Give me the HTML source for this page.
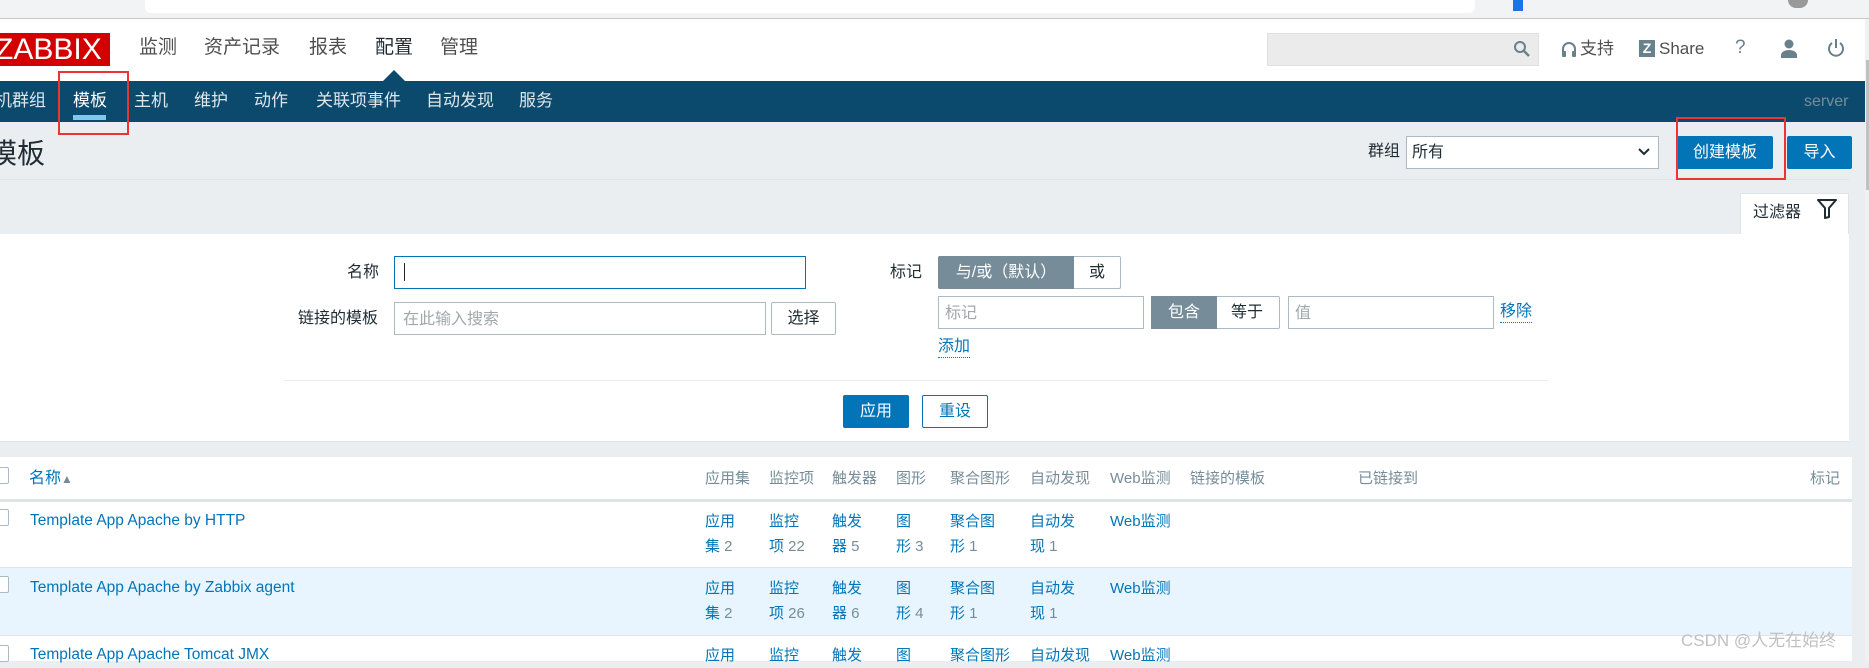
<!DOCTYPE html>
<html><head><meta charset="utf-8"><style>
*{margin:0;padding:0;box-sizing:border-box}
body{width:1869px;height:661px;overflow:hidden;position:relative;background:#ebeef0;font-family:"Liberation Sans","Noto Sans CJK SC",sans-serif;color:#1f2c33;line-height:1.2}
.a{position:absolute;white-space:nowrap}
.blue{color:#0275b8}
.btn{position:absolute;background:#0275b8;color:#fff;border-radius:2px;text-align:center;font-size:16px}
.btnw{position:absolute;background:#fff;color:#0275b8;border:1px solid #0275b8;border-radius:2px;text-align:center;font-size:16px}
.inp{position:absolute;background:#fff;border:1px solid #acbbc2}
.ph{color:#a0a8ac;font-size:16px}
.th{font-size:15px;color:#768d99;top:470px}
.c{font-size:15px;color:#0275b8;line-height:25px}
.tm{position:absolute;top:37px;font-size:19px;color:#4f4f4f}
.nv{position:absolute;top:91px;font-size:17px;color:#fff}
</style></head><body>
<!-- browser strip -->
<div class="a" style="left:0;top:0;width:1869px;height:19px;background:#f1f3f4;border-bottom:1px solid #c8c8c8"></div>
<div class="a" style="left:145px;top:0;width:1330px;height:13px;background:#fff;border-radius:0 0 6px 6px"></div>
<div class="a" style="left:1513px;top:0;width:10px;height:11px;background:#1a73e8"></div>
<div class="a" style="left:1788px;top:0;width:20px;height:8px;background:#999;border-radius:0 0 10px 10px"></div>
<!-- header -->
<div class="a" style="left:0;top:19px;width:1869px;height:62px;background:#fff"></div>
<div class="a" style="left:0;top:33px;width:110px;height:33px;background:#d40000;color:#fff;font-size:30px;line-height:33px;overflow:hidden"><span style="margin-left:-5px">ZABBIX</span></div>
<div class="tm" style="left:139px">监测</div>
<div class="tm" style="left:204px">资产记录</div>
<div class="tm" style="left:309px">报表</div>
<div class="tm" style="left:375px;color:#1f2c33">配置</div>
<div class="tm" style="left:440px">管理</div>
<div class="a" style="left:383px;top:70px;width:0;height:0;border-left:11px solid transparent;border-right:11px solid transparent;border-bottom:11px solid #0b4a6d"></div>
<div class="a" style="left:1267px;top:33px;width:272px;height:33px;background:#ebebeb;border:1px solid #e0e0e0"></div>
<svg class="a" style="left:1513px;top:40px" width="18" height="18" viewBox="0 0 18 18"><circle cx="7" cy="7" r="5" fill="none" stroke="#69808d" stroke-width="2"/><path d="M11 11l5 5" stroke="#69808d" stroke-width="2.5"/></svg>
<svg class="a" style="left:1561px;top:41px" width="16" height="18" viewBox="0 0 16 18"><path d="M2 11V8a6 6 0 0112 0v3" fill="none" stroke="#69808d" stroke-width="2"/><rect x="1" y="10" width="4" height="6" rx="1" fill="#69808d"/><rect x="11" y="10" width="4" height="6" rx="1" fill="#69808d"/></svg>
<div class="a" style="left:1580px;top:39px;font-size:17px;color:#4f4f4f">支持</div>
<div class="a" style="left:1639px;top:40px;width:16px;height:17px;background:#69808d;color:#fff;font-size:14px;font-weight:bold;text-align:center;line-height:17px">Z</div>
<div class="a" style="left:1659px;top:39px;font-size:17px;color:#4f4f4f">Share</div>
<div class="a" style="left:1735px;top:37px;font-size:19px;color:#69808d">?</div>
<svg class="a" style="left:1780px;top:39px" width="18" height="19" viewBox="0 0 18 19"><circle cx="9" cy="5" r="4.5" fill="#69808d"/><path d="M1 19v-3c0-3 4-5 8-5s8 2 8 5v3z" fill="#69808d"/></svg>
<svg class="a" style="left:1827px;top:38px" width="18" height="20" viewBox="0 0 18 20"><path d="M5 5a7 7 0 108 0" fill="none" stroke="#69808d" stroke-width="2"/><path d="M9 1v9" stroke="#69808d" stroke-width="2"/></svg>
<!-- nav -->
<div class="a" style="left:0;top:81px;width:1865px;height:41px;background:#0b4a6d"></div>
<div class="nv" style="left:-5px;color:#dfe6ea">机群组</div>
<div class="nv" style="left:73px">模板</div>
<div class="nv" style="left:134px;color:#dfe6ea">主机</div>
<div class="nv" style="left:194px;color:#dfe6ea">维护</div>
<div class="nv" style="left:254px;color:#dfe6ea">动作</div>
<div class="nv" style="left:316px;color:#dfe6ea">关联项事件</div>
<div class="nv" style="left:426px;color:#dfe6ea">自动发现</div>
<div class="nv" style="left:519px;color:#dfe6ea">服务</div>
<div class="a" style="left:73px;top:115px;width:33px;height:5px;background:#80c7f0"></div>
<div class="a" style="left:1804px;top:92px;font-size:16px;color:#768d99">server</div>
<div class="a" style="left:58px;top:71px;width:71px;height:64px;border:2px solid #ee3333"></div>
<!-- title -->
<div class="a" style="left:-11px;top:137px;font-size:28px;color:#1f2c33">模板</div>
<div class="a" style="left:0;top:179px;width:1849px;height:1px;background:#dfe4e7"></div>
<div class="a" style="left:1368px;top:142px;font-size:16px">群组</div>
<div class="inp" style="left:1406px;top:136px;width:253px;height:33px;border-color:#acbbc2;font-size:16px;padding:6px 5px">所有</div>
<svg class="a" style="left:1638px;top:148px" width="12" height="8" viewBox="0 0 12 8"><path d="M1 1l5 5 5-5" fill="none" stroke="#1f2c33" stroke-width="2"/></svg>
<div class="btn" style="left:1677px;top:136px;width:96px;height:33px;line-height:33px">创建模板</div>
<div class="btn" style="left:1787px;top:136px;width:65px;height:33px;line-height:33px">导入</div>
<div class="a" style="left:1676px;top:117px;width:110px;height:63px;border:2px solid #ee3333"></div>
<!-- filter -->
<div class="a" style="left:1740px;top:193px;width:109px;height:42px;background:#fff;border:1px solid #dfe4e7;border-bottom:none"></div>
<div class="a" style="left:1753px;top:203px;font-size:16px">过滤器</div>
<svg class="a" style="left:1817px;top:199px" width="20" height="20" viewBox="0 0 20 20"><path d="M1 1h18l-7 8v9l-4 1V9z" fill="none" stroke="#1f2c33" stroke-width="2" stroke-linejoin="round"/></svg>
<div class="a" style="left:0;top:234px;width:1849px;height:208px;background:#fff;border-bottom:1px solid #dfe4e7"></div>
<div class="a" style="left:347px;top:263px;font-size:16px">名称</div>
<div class="inp" style="left:394px;top:256px;width:412px;height:33px;border-color:#0275b8"></div>
<div class="a" style="left:404px;top:263px;width:1px;height:18px;background:#1f2c33"></div>
<div class="a" style="left:298px;top:309px;font-size:16px">链接的模板</div>
<div class="inp" style="left:394px;top:302px;width:372px;height:33px;padding:7px 8px"><span class="ph">在此输入搜索</span></div>
<div class="inp" style="left:771px;top:302px;width:65px;height:33px;border-radius:2px;text-align:center;font-size:16px;line-height:31px">选择</div>
<div class="a" style="left:890px;top:263px;font-size:16px">标记</div>
<div class="a" style="left:938px;top:256px;width:183px;height:33px;border:1px solid #acbbc2;border-radius:2px;background:#fff"></div>
<div class="a" style="left:938px;top:256px;width:136px;height:33px;background:#768d99;border-radius:2px 0 0 2px;color:#fff;font-size:16px;line-height:33px;text-align:center">与/或（默认）</div>
<div class="a" style="left:1089px;top:263px;font-size:16px">或</div>
<div class="inp" style="left:938px;top:296px;width:206px;height:33px;padding:7px 6px"><span class="ph">标记</span></div>
<div class="a" style="left:1151px;top:296px;width:129px;height:33px;border:1px solid #acbbc2;border-radius:2px;background:#fff"></div>
<div class="a" style="left:1151px;top:296px;width:66px;height:33px;background:#768d99;color:#fff;font-size:16px;line-height:33px;text-align:center">包含</div>
<div class="a" style="left:1231px;top:303px;font-size:16px">等于</div>
<div class="inp" style="left:1288px;top:296px;width:206px;height:33px;padding:7px 6px"><span class="ph">值</span></div>
<div class="a blue" style="left:1500px;top:302px;font-size:16px;border-bottom:1px dotted #0275b8;line-height:20px">移除</div>
<div class="a blue" style="left:938px;top:337px;font-size:16px;border-bottom:1px dotted #0275b8;line-height:20px">添加</div>
<div class="a" style="left:284px;top:380px;width:1264px;height:1px;background:#ebeef0"></div>
<div class="btn" style="left:843px;top:395px;width:66px;height:33px;line-height:33px">应用</div>
<div class="btnw" style="left:922px;top:395px;width:66px;height:33px;line-height:31px">重设</div>
<!-- table -->
<div class="a" style="left:0;top:457px;width:1852px;height:204px;background:#fff"></div>
<div class="a" style="left:0;top:499px;width:1852px;height:3px;background:#dfe4e7"></div>
<div class="a" style="left:0;top:567px;width:1852px;height:69px;background:#e8f5ff;border-top:1px solid #dfe4e7;border-bottom:1px solid #dfe4e7"></div>
<div class="a" style="left:-8px;top:467px;width:17px;height:17px;border:1px solid #acbbc2;border-radius:2px;background:#fff"></div>
<div class="a" style="left:-8px;top:509px;width:17px;height:17px;border:1px solid #acbbc2;border-radius:2px;background:#fff"></div>
<div class="a" style="left:-8px;top:576px;width:17px;height:17px;border:1px solid #acbbc2;border-radius:2px;background:#fff"></div>
<div class="a" style="left:-8px;top:645px;width:17px;height:17px;border:1px solid #acbbc2;border-radius:2px;background:#fff"></div>
<div class="a blue" style="left:29px;top:469px;font-size:16px">名称<span style="color:#768d99;font-size:12px">▲</span></div>
<div class="a th" style="left:705px">应用集</div>
<div class="a th" style="left:769px">监控项</div>
<div class="a th" style="left:832px">触发器</div>
<div class="a th" style="left:896px">图形</div>
<div class="a th" style="left:950px">聚合图形</div>
<div class="a th" style="left:1030px">自动发现</div>
<div class="a th" style="left:1110px">Web监测</div>
<div class="a th" style="left:1190px">链接的模板</div>
<div class="a th" style="left:1358px">已链接到</div>
<div class="a th" style="left:1810px">标记</div>

<div class="a blue" style="left:30px;top:512px;font-size:15.5px">Template App Apache by HTTP</div>
<div class="a c" style="left:705px;top:509px">应用<br>集<span style="color:#768d99"> 2</span></div>
<div class="a c" style="left:769px;top:509px">监控<br>项<span style="color:#768d99"> 22</span></div>
<div class="a c" style="left:832px;top:509px">触发<br>器<span style="color:#768d99"> 5</span></div>
<div class="a c" style="left:896px;top:509px">图<br>形<span style="color:#768d99"> 3</span></div>
<div class="a c" style="left:950px;top:509px">聚合图<br>形<span style="color:#768d99"> 1</span></div>
<div class="a c" style="left:1030px;top:509px">自动发<br>现<span style="color:#768d99"> 1</span></div>
<div class="a c" style="left:1110px;top:509px">Web监测</div>

<div class="a blue" style="left:30px;top:579px;font-size:15.5px">Template App Apache by Zabbix agent</div>
<div class="a c" style="left:705px;top:576px">应用<br>集<span style="color:#768d99"> 2</span></div>
<div class="a c" style="left:769px;top:576px">监控<br>项<span style="color:#768d99"> 26</span></div>
<div class="a c" style="left:832px;top:576px">触发<br>器<span style="color:#768d99"> 6</span></div>
<div class="a c" style="left:896px;top:576px">图<br>形<span style="color:#768d99"> 4</span></div>
<div class="a c" style="left:950px;top:576px">聚合图<br>形<span style="color:#768d99"> 1</span></div>
<div class="a c" style="left:1030px;top:576px">自动发<br>现<span style="color:#768d99"> 1</span></div>
<div class="a c" style="left:1110px;top:576px">Web监测</div>

<div class="a blue" style="left:30px;top:646px;font-size:15.5px">Template App Apache Tomcat JMX</div>
<div class="a c" style="left:705px;top:643px">应用</div>
<div class="a c" style="left:769px;top:643px">监控</div>
<div class="a c" style="left:832px;top:643px">触发</div>
<div class="a c" style="left:896px;top:643px">图</div>
<div class="a c" style="left:950px;top:643px">聚合图形</div>
<div class="a c" style="left:1030px;top:643px">自动发现</div>
<div class="a c" style="left:1110px;top:643px">Web监测</div>

<div class="a" style="left:1681px;top:631px;font-size:17px;color:#c0c0c0">CSDN @人无在始终</div>
<!-- scrollbar -->
<div class="a" style="left:1865px;top:19px;width:4px;height:642px;background:#f1f1f1"></div>
<div class="a" style="left:1866px;top:60px;width:3px;height:130px;background:#c1c1c1"></div>
</body></html>
